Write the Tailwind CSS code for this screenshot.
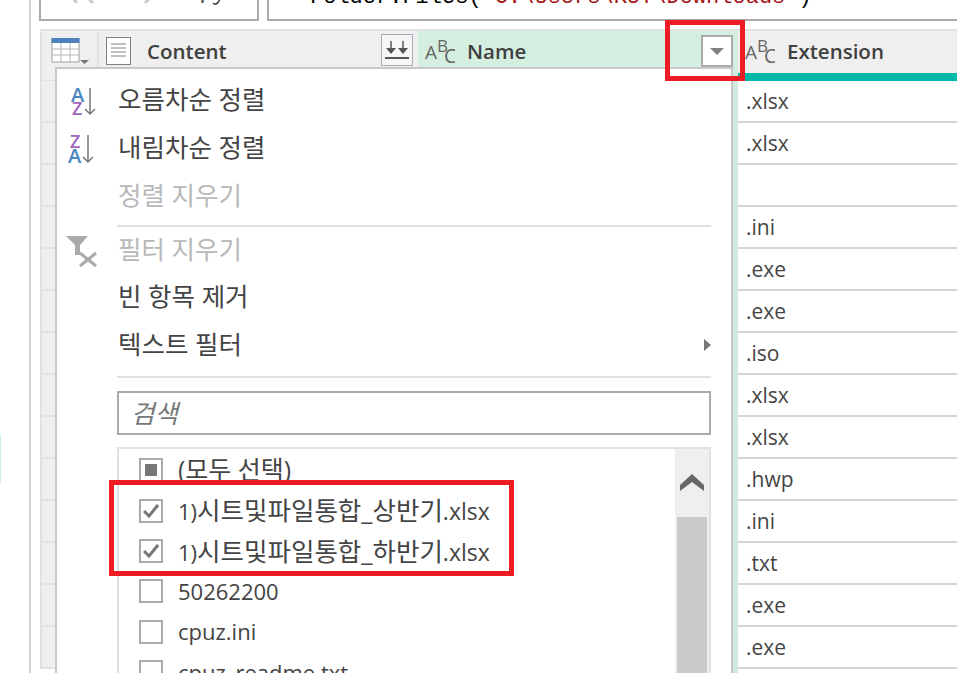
<!DOCTYPE html>
<html lang="ko">
<head>
    <meta charset="UTF-8">
    <title>Power Query filter menu</title>
    <script src="https://cdn.jsdelivr.net/npm/@tailwindcss/browser@4"></script>
</head>
<body class="bg-white text-[#444] font-['Open_Sans','Noto_Sans_CJK_KR',sans-serif] overflow-hidden">
<div class="relative w-[957px] h-[673px] overflow-hidden">

    <!-- left pane edge -->
    <div class="absolute left-[29px] top-0 w-[2px] h-full bg-[#d0d0d0]"></div>
    <div class="absolute left-0 top-[435px] w-px h-[48px] bg-[#c8f0e0]"></div>

    <!-- formula bar, only its lower part is in the picture -->
    <div class="flex gap-[8px] pl-[39px] h-[21px]">
        <div class="w-[220px] border-2 border-t-0 border-[#aaa] relative overflow-hidden">
            <svg class="absolute left-0 top-0" width="216" height="18" fill="none">
                <path d="M26 -9 L36 3 M52 3 L40 -9" stroke="#ccc" stroke-width="3"/>
                <path d="M104 3 L112 -5" stroke="#ccc" stroke-width="3"/>
                <text x="160" y="-2" font-family="Liberation Serif" font-style="italic" font-size="24" fill="#444">fx</text>
                <path d="M172 3 Q175 6 178 1 L180 -4" stroke="#444" stroke-width="1.5"/>
            </svg>
        </div>
        <div class="flex-1 border-2 border-t-0 border-r-0 border-[#aaa] overflow-hidden">
            <div class="pl-[41px] -mt-[12px] font-['Liberation_Mono',monospace] text-[22px] leading-[20px] whitespace-nowrap text-black">Folder.Files(<span class="text-[#a31515]">"C:\Users\KUT\Downloads"</span>)</div>
        </div>
    </div>

    <!-- grid -->
    <div class="flex ml-[40px] mt-[8px]">
        <!-- row number gutter -->
        <div class="w-[57px] shrink-0">
            <div class="h-[44px] bg-[#efefef] border-t-2 border-l-2 border-[#e2e2e2] flex items-start pt-[7px] pl-[9px]">
                <svg width="40" height="26" fill="none">
                    <rect x="1" y="0" width="27" height="24" fill="#fff" stroke="#a0a0a0"/>
                    <rect x="0.5" y="0" width="28" height="5" fill="#4f81bd"/>
                    <path d="M1 11h27M1 17h27M10 5v19M19 5v19" stroke="#b5b5b5"/>
                    <path d="M29 22h9l-4.500 4z" fill="#777"/>
                </svg>
            </div>
            <div class="h-[8px] bg-[#efefef] border-l-2 border-b border-[#e2e2e2]"></div>
            <div class="border-l-2 border-[#e2e2e2]">
                <div class="h-[42px] bg-[#efefef] border-b-2 border-[#e2e2e2]"></div>
                <div class="h-[42px] bg-[#efefef] border-b-2 border-[#e2e2e2]"></div>
                <div class="h-[42px] bg-[#efefef] border-b-2 border-[#e2e2e2]"></div>
                <div class="h-[42px] bg-[#efefef] border-b-2 border-[#e2e2e2]"></div>
                <div class="h-[42px] bg-[#efefef] border-b-2 border-[#e2e2e2]"></div>
                <div class="h-[42px] bg-[#efefef] border-b-2 border-[#e2e2e2]"></div>
                <div class="h-[42px] bg-[#efefef] border-b-2 border-[#e2e2e2]"></div>
                <div class="h-[42px] bg-[#efefef] border-b-2 border-[#e2e2e2]"></div>
                <div class="h-[42px] bg-[#efefef] border-b-2 border-[#e2e2e2]"></div>
                <div class="h-[42px] bg-[#efefef] border-b-2 border-[#e2e2e2]"></div>
                <div class="h-[42px] bg-[#efefef] border-b-2 border-[#e2e2e2]"></div>
                <div class="h-[42px] bg-[#efefef] border-b-2 border-[#e2e2e2]"></div>
                <div class="h-[42px] bg-[#efefef] border-b-2 border-[#e2e2e2]"></div>
                <div class="h-[42px] bg-[#efefef] border-b-2 border-[#e2e2e2]"></div>
            </div>
        </div>

        <!-- Content column -->
        <div class="w-[321px] shrink-0">
            <div class="h-[44px] bg-[#efefef] border-t-2 border-l-2 border-[#e2e2e2] flex items-center pl-[7px] pb-[2px]">
                <svg width="26" height="28" fill="none" class="mb-[1px]">
                    <rect x="0.500" y="0.500" width="24" height="27" fill="#fff" stroke="#808080"/>
                    <path d="M5 7h15M5 11h15M5 15h15M5 19h15" stroke="#808080"/>
                </svg>
                <span class="ml-[15px] text-[20.500px] leading-[28px] font-semibold text-[#404040]">Content</span>
                <div class="ml-auto mr-[5px] mb-[2px] w-[32px] h-[32px] bg-[#f6f6f6] border border-[#aab] flex items-center justify-center">
                    <svg width="24" height="22" fill="none">
                        <path d="M6 2v9M18 2v9" stroke="#555" stroke-width="1.500"/>
                        <path d="M1 9h10l-5 6zM13 9h10l-5 6z" fill="#555"/>
                        <path d="M0 19h24" stroke="#555" stroke-width="2"/>
                    </svg>
                </div>
            </div>
        </div>

        <!-- Name column -->
        <div class="w-[320px] shrink-0 bg-[#d4efe0]">
            <div class="h-[44px] border-t-2 border-[#e2e2e2] flex items-center pl-[7px] pb-[2px]">
                <svg width="30" height="26" class="shrink-0">
                    <text x="0" y="21" font-size="19" fill="#666">A</text>
                    <text x="12" y="14" font-size="17" fill="#666">B</text>
                    <text x="19" y="25" font-size="20" fill="#666">C</text>
                </svg>
                <span class="ml-[12px] text-[20.500px] leading-[28px] font-semibold text-[#404040]">Name</span>
                <div class="ml-auto mr-[5px] w-[32px] h-[32px] bg-white border-2 border-[#aaa] flex items-center justify-center">
                    <svg width="14" height="8"><path d="M0 1h14l-7 7z" fill="#808080"/></svg>
                </div>
            </div>
        </div>

        <!-- Extension column -->
        <div class="flex-1">
            <div class="h-[44px] bg-[#efefef] border-t-2 border-[#e2e2e2] flex items-center pl-[7px] pb-[2px]">
                <svg width="30" height="26" class="shrink-0">
                    <text x="0" y="21" font-size="19" fill="#666">A</text>
                    <text x="12" y="14" font-size="17" fill="#666">B</text>
                    <text x="19" y="25" font-size="20" fill="#666">C</text>
                </svg>
                <span class="ml-[12px] text-[20.500px] leading-[28px] font-semibold text-[#404040]">Extension</span>
            </div>
            <div class="h-[8px] bg-[#00b8a9]"></div>
            <div class="text-[21px] pl-[8px]">
                <div class="-ml-[8px] pl-[8px] h-[42px] leading-[40px] border-b-2 border-[#d4d4d4]">.xlsx</div>
                <div class="-ml-[8px] pl-[8px] h-[42px] leading-[40px] border-b-2 border-[#d4d4d4]">.xlsx</div>
                <div class="-ml-[8px] pl-[8px] h-[42px] leading-[40px] border-b-2 border-[#d4d4d4]"></div>
                <div class="-ml-[8px] pl-[8px] h-[42px] leading-[40px] border-b-2 border-[#d4d4d4]">.ini</div>
                <div class="-ml-[8px] pl-[8px] h-[42px] leading-[40px] border-b-2 border-[#d4d4d4]">.exe</div>
                <div class="-ml-[8px] pl-[8px] h-[42px] leading-[40px] border-b-2 border-[#d4d4d4]">.exe</div>
                <div class="-ml-[8px] pl-[8px] h-[42px] leading-[40px] border-b-2 border-[#d4d4d4]">.iso</div>
                <div class="-ml-[8px] pl-[8px] h-[42px] leading-[40px] border-b-2 border-[#d4d4d4]">.xlsx</div>
                <div class="-ml-[8px] pl-[8px] h-[42px] leading-[40px] border-b-2 border-[#d4d4d4]">.xlsx</div>
                <div class="-ml-[8px] pl-[8px] h-[42px] leading-[40px] border-b-2 border-[#d4d4d4]">.hwp</div>
                <div class="-ml-[8px] pl-[8px] h-[42px] leading-[40px] border-b-2 border-[#d4d4d4]">.ini</div>
                <div class="-ml-[8px] pl-[8px] h-[42px] leading-[40px] border-b-2 border-[#d4d4d4]">.txt</div>
                <div class="-ml-[8px] pl-[8px] h-[42px] leading-[40px] border-b-2 border-[#d4d4d4]">.exe</div>
                <div class="-ml-[8px] pl-[8px] h-[42px] leading-[40px] border-b-2 border-[#d4d4d4]">.exe</div>
            </div>
        </div>
    </div>

    <!-- Name column sliver next to the menu -->
    <div class="absolute left-[733px] top-[73px] w-[5px] h-[600px] bg-[#cfe9da]"></div>

    <!-- filter menu -->
    <div class="absolute left-[55px] top-[67px] w-[678px] h-[620px] bg-white border-2 border-r-0 border-[#c8c8c8] pt-[7px]">
        <div class="absolute right-0 top-0 w-[2px] h-full bg-[#c8c8c8]"></div>

        <div class="flex items-center h-[48px] pl-[61px] pb-[2px] text-[25.500px] relative">
            <svg class="absolute left-[13px] top-[9px]" width="28" height="32">
                <text x="1" y="17" font-size="20" font-weight="600" fill="#4a86c0">A</text>
                <text x="2" y="30" font-size="18" font-weight="600" fill="#a066c0">Z</text>
                <path d="M20 3v26M15 24l5 5 5-5" fill="none" stroke="#777" stroke-width="1.500"/>
            </svg>
            오름차순 정렬
        </div>
        <div class="flex items-center h-[48px] pl-[61px] pb-[2px] text-[25.500px] relative">
            <svg class="absolute left-[11px] top-[9px]" width="30" height="32">
                <text x="2" y="15" font-size="18" font-weight="600" fill="#a066c0">Z</text>
                <text x="0" y="30" font-size="20" font-weight="600" fill="#4a86c0">A</text>
                <path d="M20 2v27M15 24l5 5 5-5" fill="none" stroke="#777" stroke-width="1.500"/>
            </svg>
            내림차순 정렬
        </div>
        <div class="flex items-center h-[48px] pl-[61px] pb-[2px] text-[25.500px] text-[#b8b8b8]">정렬 지우기</div>
        <div class="h-[2px] ml-[60px] mr-[22px] mt-[5px] bg-[#dee1e6]"></div>
        <div class="flex items-center h-[48px] -mt-[1px] pl-[61px] pb-[2px] text-[25.500px] text-[#b8b8b8] relative">
            <svg class="absolute left-[9px] top-[9px]" width="34" height="32" fill="none">
                <path d="M0 1h22l-8 9v10h-5v-10z" fill="#aaa"/>
                <path d="M14 18l16 13M30 18l-16 13" stroke="#aaa" stroke-width="3"/>
            </svg>
            필터 지우기
        </div>
        <div class="flex items-center h-[48px] pl-[61px] pb-[3px] text-[25.500px]">빈 항목 제거</div>
        <div class="flex items-center h-[48px] pl-[61px] pb-[3px] pr-[22px] text-[25.500px]">
            텍스트 필터
            <svg class="ml-auto" width="7" height="12"><path d="M0 0l7 6-7 6z" fill="#777"/></svg>
        </div>
        <div class="h-[2px] ml-[60px] mr-[22px] mt-[6px] bg-[#dee1e6]"></div>

        <div class="h-[44px] ml-[60px] mr-[22px] mt-[13px] border-2 border-[#aaa] flex items-center pl-[12px] text-[25.500px] italic text-[#777]">검색</div>

        <div class="ml-[60px] mr-[22px] mt-[12px] border-2 border-b-0 border-[#dee1e6] h-[300px] flex">
            <div class="flex-1 text-[22px] pt-[1px]">
                <div class="h-[40.400px] flex items-center pl-[20px]">
                    <span class="w-[24px] h-[24px] border-2 border-[#aaa] flex items-center justify-center shrink-0"><span class="w-[12px] h-[12px] bg-[#777]"></span></span>
                    <span class="ml-[15px] text-[25px]">(모두 선택)</span>
                </div>
                <div class="h-[40.400px] flex items-center pl-[20px]">
                    <span class="w-[24px] h-[24px] border-2 border-[#aaa] flex items-center justify-center shrink-0">
                        <svg width="16" height="14" fill="none"><path d="M1 7l5 5 9-11" stroke="#777" stroke-width="3"/></svg>
                    </span>
                    <span class="ml-[15px]">1)<span class="text-[25.500px]">시트및파일통합_상반기</span><span class="text-[23px]">.xlsx</span></span>
                </div>
                <div class="h-[40.400px] flex items-center pl-[20px]">
                    <span class="w-[24px] h-[24px] border-2 border-[#aaa] flex items-center justify-center shrink-0">
                        <svg width="16" height="14" fill="none"><path d="M1 7l5 5 9-11" stroke="#777" stroke-width="3"/></svg>
                    </span>
                    <span class="ml-[15px]">1)<span class="text-[25.500px]">시트및파일통합_하반기</span><span class="text-[23px]">.xlsx</span></span>
                </div>
                <div class="h-[40.400px] flex items-center pl-[20px]">
                    <span class="w-[24px] h-[24px] border-2 border-[#aaa] shrink-0"></span>
                    <span class="ml-[15px]">50262200</span>
                </div>
                <div class="h-[40.400px] flex items-center pl-[20px]">
                    <span class="w-[24px] h-[24px] border-2 border-[#aaa] shrink-0"></span>
                    <span class="ml-[15px]">cpuz.ini</span>
                </div>
                <div class="h-[40.400px] flex items-center pl-[20px]">
                    <span class="w-[24px] h-[24px] border-2 border-[#aaa] shrink-0"></span>
                    <span class="ml-[15px]">cpuz_readme.txt</span>
                </div>
            </div>
            <!-- scrollbar -->
            <div class="w-[34px] bg-[#efefef] px-[2px] flex flex-col">
                <div class="h-[68px] flex items-center justify-center">
                    <svg width="24" height="18"><path d="M12 0l12 11v6l-12-9-12 9v-6z" fill="#666"/></svg>
                </div>
                <div class="flex-1 bg-[#cacaca]"></div>
            </div>
        </div>
    </div>

    <!-- red annotation boxes -->
    <div class="absolute left-[665px] top-[20px] w-[80px] h-[61px] border-[5px] border-[#ed1c24]"></div>
    <div class="absolute left-[109px] top-[480px] w-[405px] h-[96px] border-[5px] border-[#ed1c24]"></div>
</div>
</body>
</html>
